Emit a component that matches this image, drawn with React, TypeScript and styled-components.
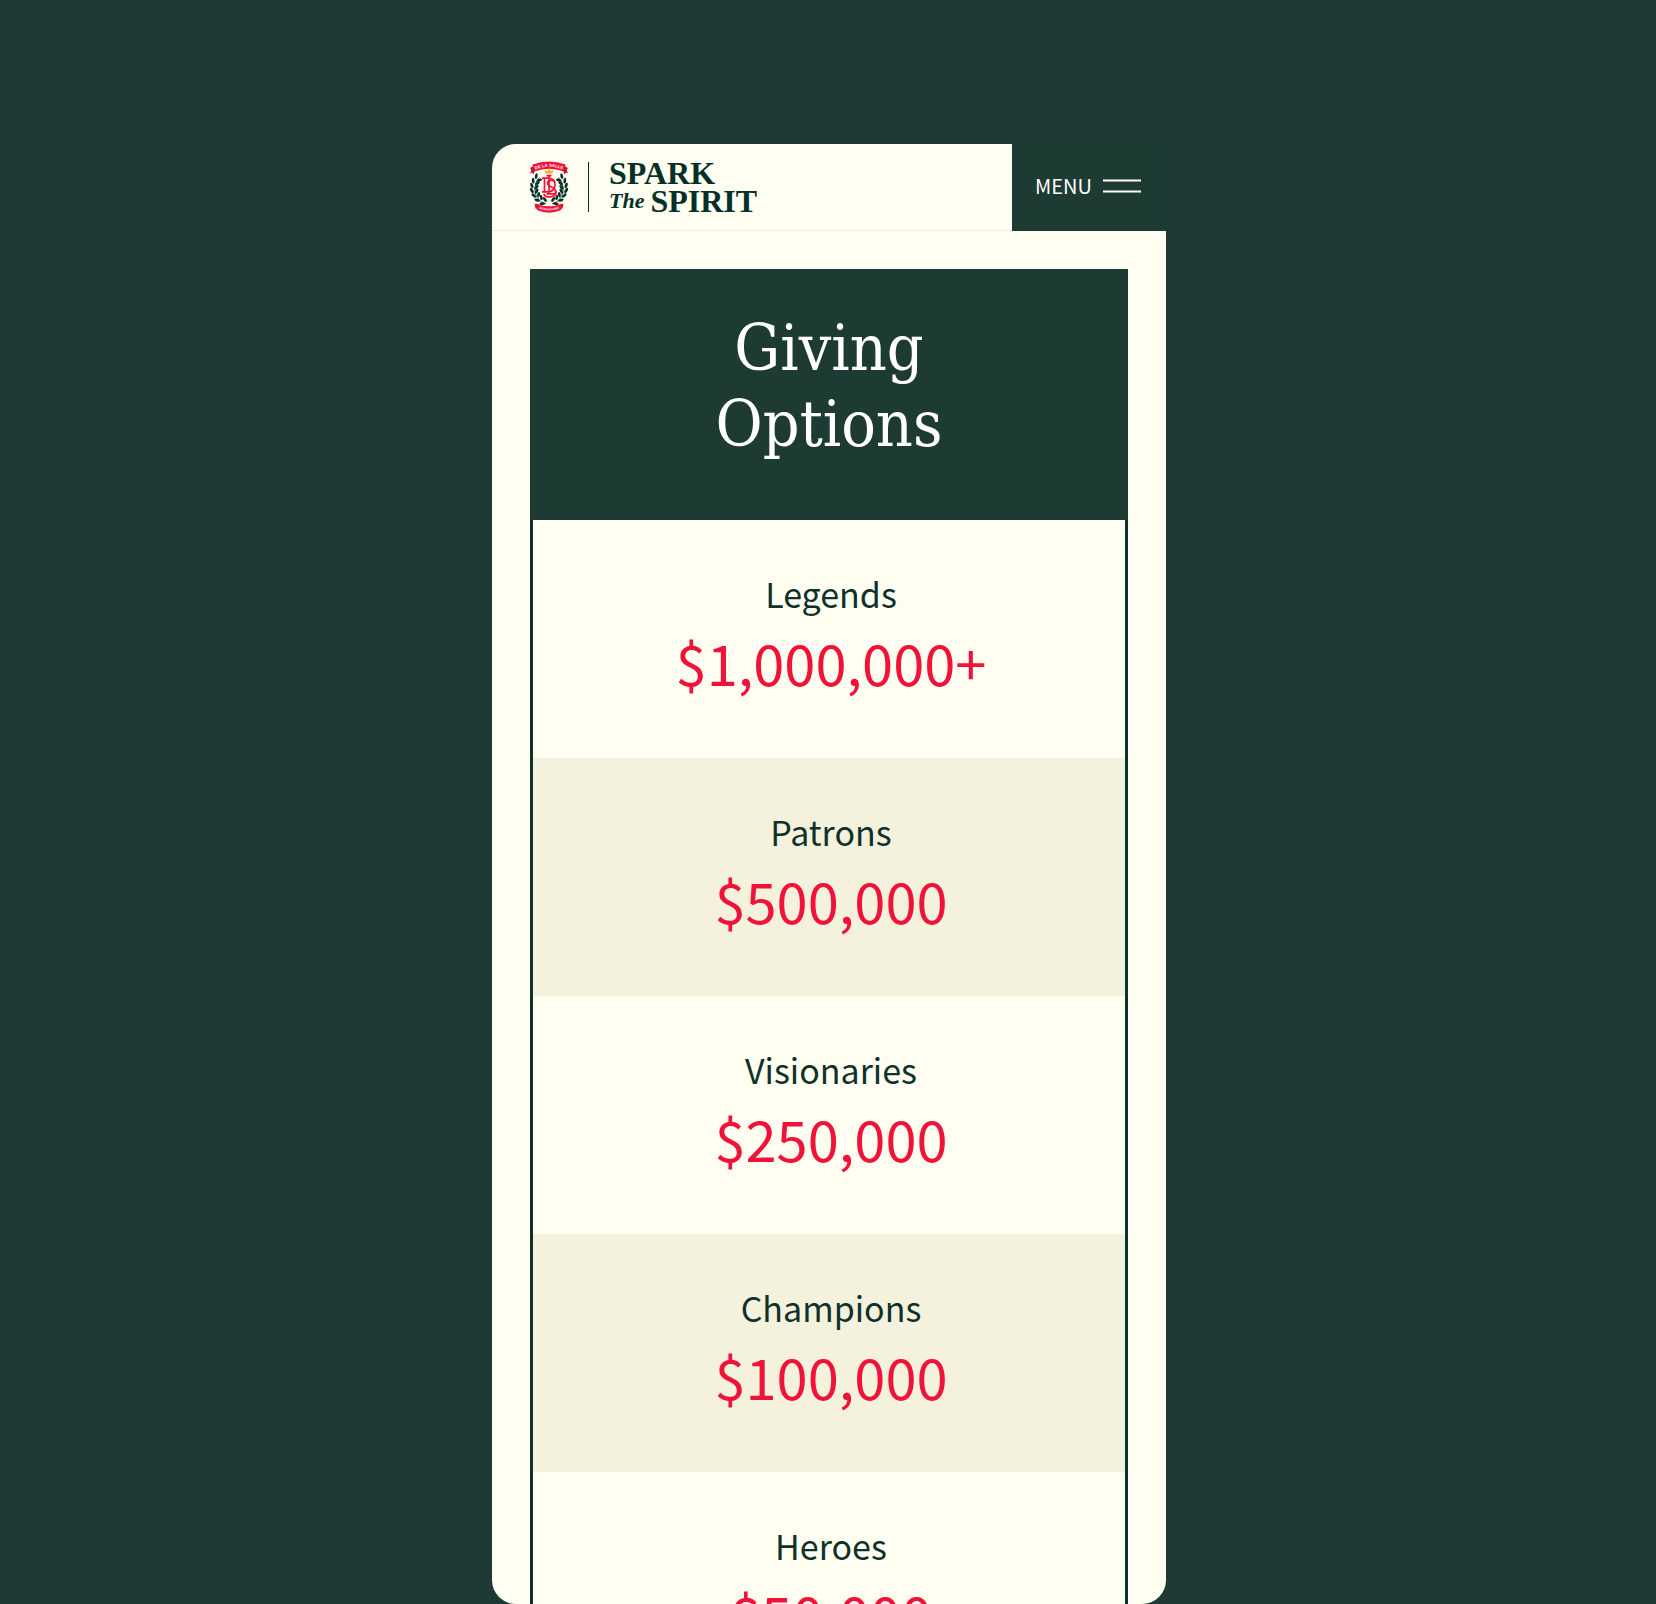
import React from "react";
import styled, { createGlobalStyle } from "styled-components";

const color = {
  page: "#1f3a34",
  pine: "#1e3b33",
  ink: "#10312a",
  logo: "#04302a",
  cream: "#fffef0",
  sand: "#f4f2dc",
  rule: "#efecdb",
  red: "#f01238",
  gold: "#f2b632",
};

const sans = `"Noto Sans CJK SC", "Noto Sans", sans-serif`;
const slab = `"DejaVu Serif Condensed", "DejaVu Serif", serif`;
const display = `"Liberation Serif", serif`;

const GlobalStyle = createGlobalStyle`
  *, *::before, *::after { box-sizing: border-box; }
  body { margin: 0; background: ${color.page}; font-family: ${sans}; }
`;

const Page = styled.div`
  display: flex;
  justify-content: center;
  height: 100vh;
  padding: 144px 0 0 2px;
`;

const Phone = styled.div`
  flex: 0 1 674px;
  min-width: 0;
  overflow: hidden;
  border-radius: 24px 0 24px 24px;
  background: ${color.cream};
`;

const Header = styled.header`
  display: flex;
  justify-content: space-between;
  height: 87px;
  border-bottom: 1px solid ${color.rule};
`;

const Brand = styled.a`
  display: flex;
  align-items: center;
  padding-left: 37px;
  color: ${color.logo};
  text-decoration: none;
`;

const Divider = styled.span`
  width: 1px;
  height: 50px;
  margin: 0 20px 0 19px;
  background: ${color.logo};
`;

const Wordmark = styled.span`
  display: grid;
  font: bold 32px/28px ${display};
`;

const WordLine = styled.span`
  display: flex;
  align-items: center;
  gap: 6px;
`;

const Article = styled.em`
  font-size: 22px;
`;

const MenuButton = styled.button`
  display: flex;
  align-items: center;
  gap: 11px;
  margin-bottom: -1px;
  padding: 0 25px 3px 23px;
  border: 0;
  background: ${color.pine};
  color: #fff;
  font: 400 20px/28px ${sans};
  cursor: pointer;
`;

const Panel = styled.section`
  margin: 38px;
  border: 3px solid ${color.ink};
`;

const Title = styled.h1`
  margin: 0;
  padding: 38px 24px 58px;
  background: ${color.pine};
  box-shadow: 0 0 0 3px ${color.pine};
  clip-path: inset(-3px -3px 0);
  color: #fff;
  font: 400 64px/76px ${slab};
  text-align: center;
`;

const Word = styled.span`
  display: block;
`;

const Tiers = styled.ul`
  margin: 0;
  padding: 0;
  list-style: none;
`;

const Tier = styled.li`
  display: grid;
  gap: 4px;
  padding: 50px 12px 56px 16px;
  text-align: center;

  &:nth-child(even) {
    background: ${color.sand};
  }
`;

const TierName = styled.h2`
  margin: 0;
  color: ${color.ink};
  font: 400 34px/48px ${sans};
`;

const Amount = styled.p`
  margin: 0;
  color: ${color.red};
  font: 400 56px/80px ${sans};
`;

const leaves = [
  [14, 41, 70], [9.5, 38, 45], [6.5, 34, 22], [4.6, 29.5, 5], [4.6, 25, -8], [5.8, 20.500, -22], [8.5, 16.500, -40],
];

function Crest() {
  const branch = (
    <>
      <path d="M17 43C9 41 5 33 6 26c.4-4 2-7 4.500-9.500" fill="none" stroke={color.logo} strokeWidth="0.800" />
      {leaves.map(([x, y, r]) => (
        <g key={y} transform={`translate(${x} ${y}) rotate(${-r})`} fill={color.logo}>
          <ellipse cx="-1.500" cy="-1" rx="1.400" ry="2.900" transform="rotate(-28)" />
          <ellipse cx="3" cy="-1" rx="1.400" ry="2.800" transform="rotate(34)" />
        </g>
      ))}
    </>
  );
  return (
    <svg width="40" height="52" viewBox="0 0 40 52" role="img" aria-label="De La Salle crest">
      <defs>
        <path id="crest-top" d="M6.500 8.600Q20 2.900 33.500 8.600" />
        <path id="crest-bottom" d="M9 47.200Q20 51.600 31 47.200" />
      </defs>
      {branch}
      <g transform="translate(40 0) scale(-1 1)">{branch}</g>
      <path d="M1.200 7 5 4.500 5.500 11 4.500 13.500 3 11.500.8 12.500 2.300 9.500ZM38.800 7 35 4.500 34.500 11 35.500 13.500 37 11.500 39.200 12.500 37.700 9.500Z" fill="#c90f31" />
      <path d="M3.500 3.600Q20-2.400 36.500 3.600L34.800 10.600Q20 5 5.200 10.600Z" fill={color.red} />
      <path d="M5.500 43 9 43.500 8.500 48 6.500 47.500ZM34.500 43 31 43.500 31.500 48 33.500 47.500Z" fill="#c90f31" />
      <path d="M6.800 42.500Q20 48 33.200 42.500L31.800 49.300Q20 54 8.200 49.300Z" fill={color.red} />
      <g fill="#fff" fontFamily="Liberation Sans, sans-serif" fontWeight="700" textAnchor="middle">
        <text fontSize="4.300"><textPath href="#crest-top" startOffset="50%">DE LA SALLE</textPath></text>
        <text fontSize="3"><textPath href="#crest-bottom" startOffset="50%">SIGNUM FIDEI</textPath></text>
      </g>
      <path d="M15.500 8.800 18 10.200 20 7.800 22 10.200 24.500 8.800 23.500 12.400H16.500Z" fill={color.gold} />
      <g fill="none" stroke={color.red} strokeWidth="1.700">
        <path d="M13 17.200H18.500C24 17.200 26 19.500 26 23.500S24 30.800 18.500 30.800H13M15.500 17.200V30.800" />
        <path d="M17.500 14.600H22.500M20 14.600V32.800M17.500 32.800H26.500V30" />
        <path d="M26 21.500C25 18.500 18.500 18.800 18.500 22.300 18.500 26 27 25.500 27 31 27 36.800 16 37.500 14.800 32.800" />
      </g>
    </svg>
  );
}

function MenuLines() {
  return (
    <svg width="38" height="14" viewBox="0 0 38 14" aria-hidden="true">
      <path d="M0 1.500H38M0 12.500H38" stroke="#fff" strokeWidth="2" />
    </svg>
  );
}

const tiers = [
  { name: "Legends", amount: "$1,000,000+" },
  { name: "Patrons", amount: "$500,000" },
  { name: "Visionaries", amount: "$250,000" },
  { name: "Champions", amount: "$100,000" },
  { name: "Heroes", amount: "$50,000" },
];

export default function App() {
  return (
    <>
      <GlobalStyle />
      <Page>
        <Phone>
          <Header>
            <Brand href="#home">
              <Crest />
              <Divider />
              <Wordmark>
                <WordLine>SPARK</WordLine>
                <WordLine>
                  <Article>The</Article>SPIRIT
                </WordLine>
              </Wordmark>
            </Brand>
            <MenuButton type="button">
              MENU
              <MenuLines />
            </MenuButton>
          </Header>
          <Panel>
            <Title>
              <Word>Giving</Word> <Word>Options</Word>
            </Title>
            <Tiers>
              {tiers.map((tier) => (
                <Tier key={tier.name}>
                  <TierName>{tier.name}</TierName>
                  <Amount>{tier.amount}</Amount>
                </Tier>
              ))}
            </Tiers>
          </Panel>
        </Phone>
      </Page>
    </>
  );
}
